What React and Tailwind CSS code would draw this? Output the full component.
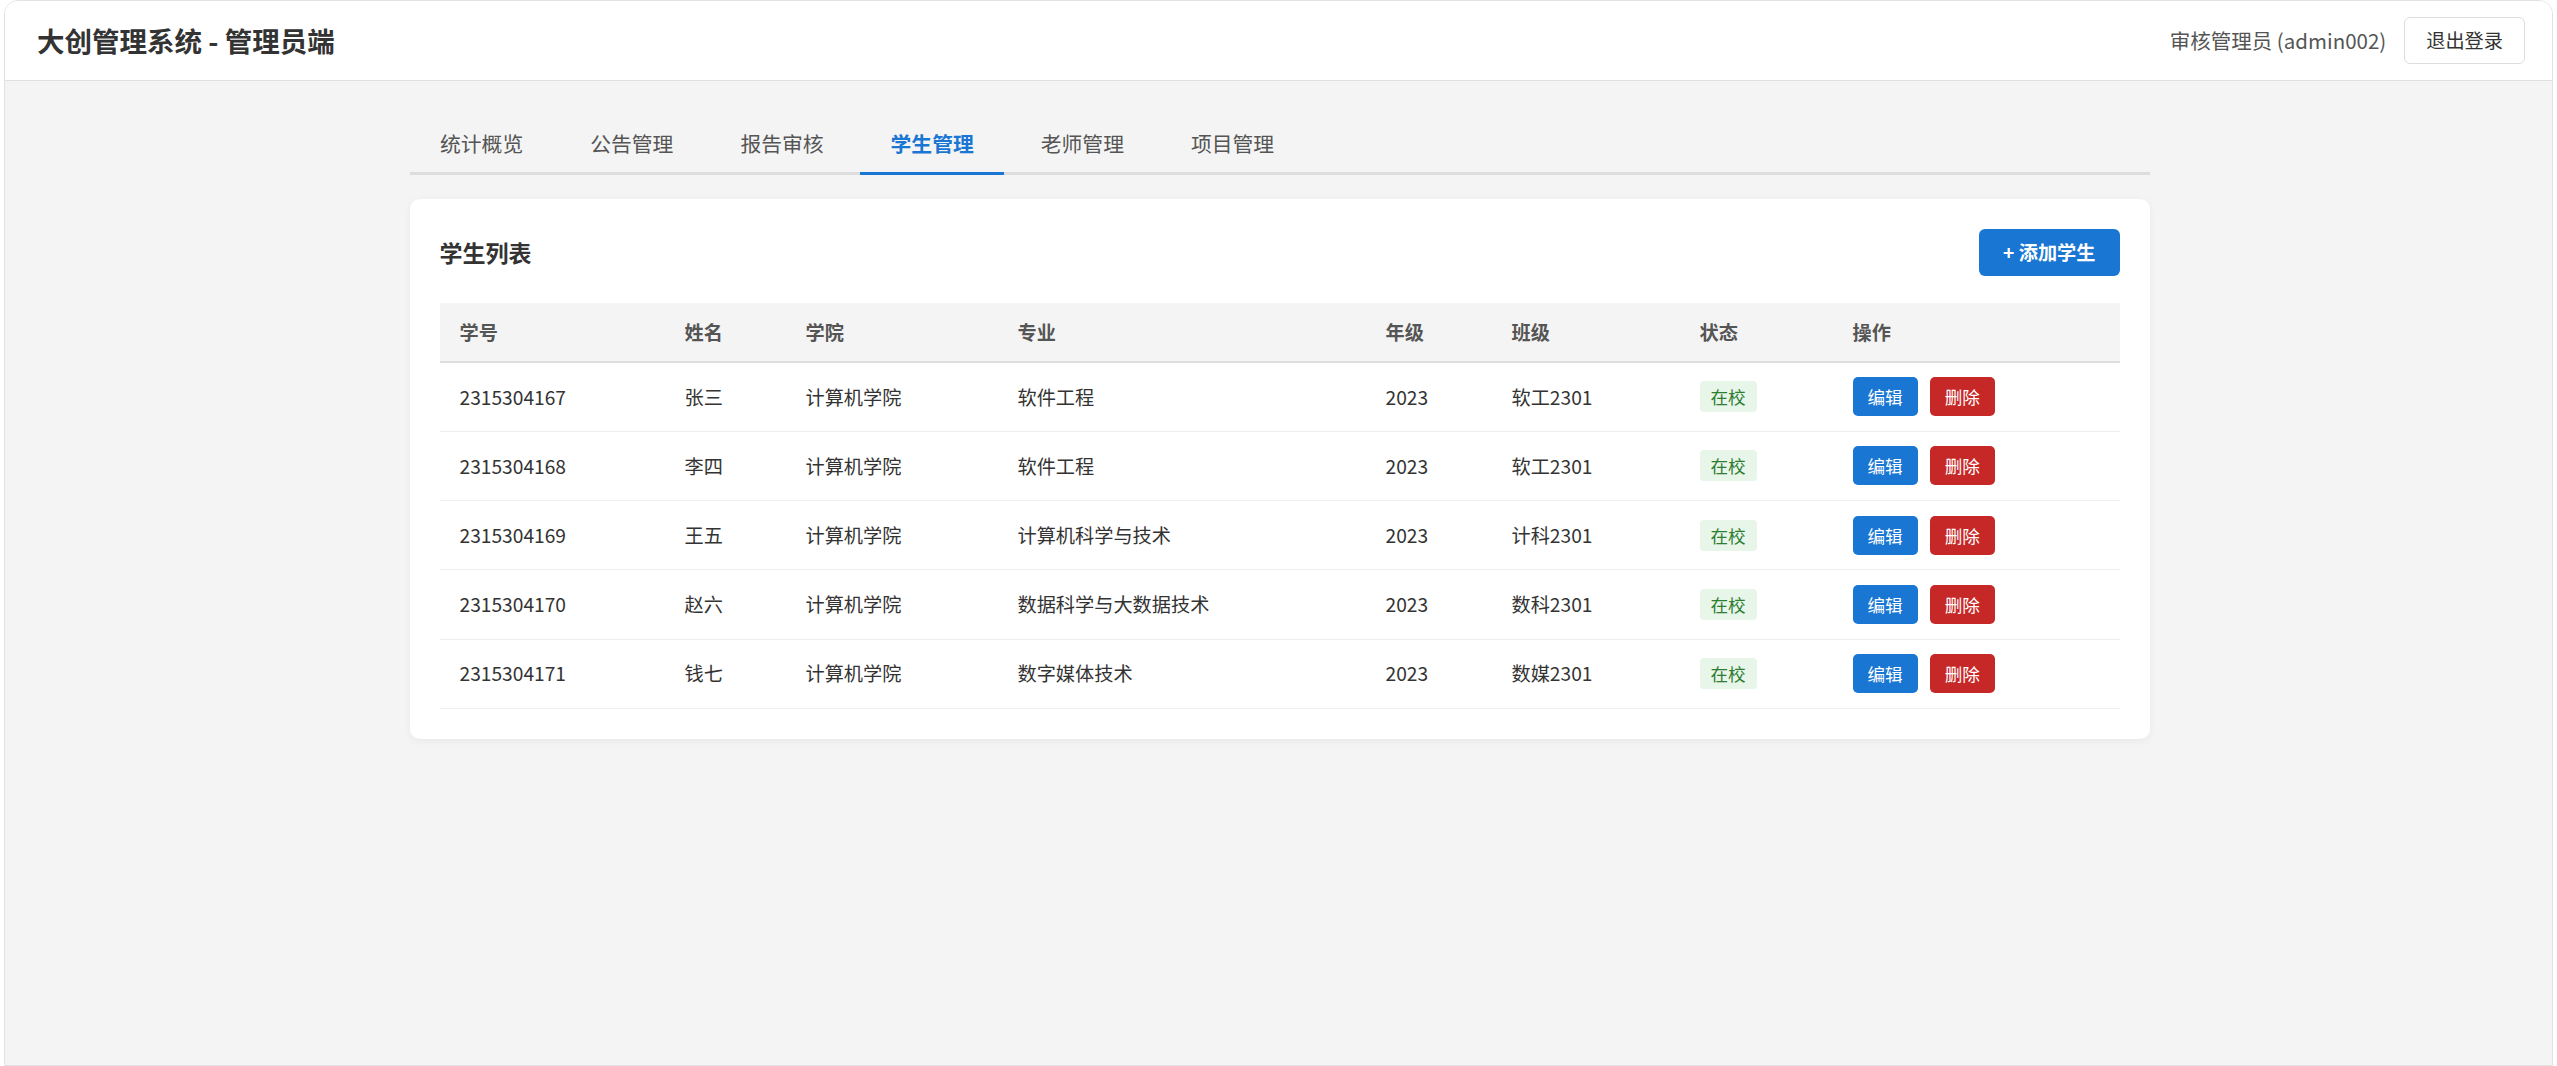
import React from "react";

const students = [
  { id: "2315304167", name: "张三", college: "计算机学院", major: "软件工程", grade: "2023", klass: "软工2301" },
  { id: "2315304168", name: "李四", college: "计算机学院", major: "软件工程", grade: "2023", klass: "软工2301" },
  { id: "2315304169", name: "王五", college: "计算机学院", major: "计算机科学与技术", grade: "2023", klass: "计科2301" },
  { id: "2315304170", name: "赵六", college: "计算机学院", major: "数据科学与大数据技术", grade: "2023", klass: "数科2301" },
  { id: "2315304171", name: "钱七", college: "计算机学院", major: "数字媒体技术", grade: "2023", klass: "数媒2301" },
];

const tabs = ["统计概览", "公告管理", "报告审核", "学生管理", "老师管理", "项目管理"];

// column widths measured off the reference table
const columns = [
  { label: "学号", w: "w-[225px]" },
  { label: "姓名", w: "w-[121px]" },
  { label: "学院", w: "w-[212px]" },
  { label: "专业", w: "w-[368px]" },
  { label: "年级", w: "w-[126px]" },
  { label: "班级", w: "w-[188px]" },
  { label: "状态", w: "w-[153px]" },
  { label: "操作", w: "" },
];

export default function App() {
  return (
    <div
      className="min-h-screen bg-white px-[4px]"
      style={{ fontFamily: '"Noto Sans CJK SC", "Noto Sans", sans-serif' }}
    >
      <div className="min-h-[1066px] flex flex-col border border-[#e2e2e2] rounded-t-[14px] overflow-hidden">
        {/* Top bar */}
        <header className="h-[80px] shrink-0 bg-white border-b border-[#e0e0e0] shadow-[0_1px_3px_rgba(0,0,0,0.04)] flex items-center justify-between pl-[32px] pr-[27px]">
          <h1 className="text-[27.5px] font-bold text-[#333]">大创管理系统 - 管理员端</h1>
          <div className="flex items-center gap-[18px]">
            <span className="text-[20.5px] text-[#555]">审核管理员 (admin002)</span>
            <button className="h-[47px] px-[21px] bg-white border border-[#ddd] rounded-[6px] text-[19.2px] text-[#333]">
              退出登录
            </button>
          </div>
        </header>

        {/* Main */}
        <main className="flex-1 bg-[#f4f4f4] pt-[33px]">
          <div className="w-[1740px] mx-auto translate-x-[1px]">
            <nav className="flex gap-[6px] border-b-[3px] border-[#dddddd]">
              {tabs.map((t) => {
                const active = t === "学生管理";
                return (
                  <div
                    key={t}
                    className={
                      active
                        ? "px-[30.5px] pt-[14px] pb-[14px] -mb-[3px] border-b-[3px] border-[#1976d2] text-[20.8px] leading-[30px] font-bold text-[#1976d2]"
                        : "px-[30.5px] pt-[14px] pb-[14px] -mb-[3px] border-b-[3px] border-transparent text-[20.8px] leading-[30px] text-[#555]"
                    }
                  >
                    {t}
                  </div>
                );
              })}
            </nav>

            <section className="mt-[24px] bg-white rounded-[10px] shadow-[0_2px_8px_rgba(0,0,0,0.05)] p-[30px]">
              <div className="flex items-center justify-between mb-[27px]">
                <h2 className="text-[23px] font-bold text-[#333]">学生列表</h2>
                <button className="h-[47px] px-[24px] bg-[#1976d2] text-white rounded-[6px] text-[19.2px] font-semibold">
                  + 添加学生
                </button>
              </div>

              <table className="w-full border-collapse text-left">
                <thead>
                  <tr className="bg-[#f4f4f4] border-b-2 border-[#dddddd]">
                    {columns.map((c) => (
                      <th key={c.label} className={`${c.w} h-[59px] px-[20px] text-[19.2px] font-bold text-[#555]`}>
                        {c.label}
                      </th>
                    ))}
                  </tr>
                </thead>
                <tbody>
                  {students.map((s) => (
                    <tr key={s.id} className="border-b border-[#eeeeee] text-[19.2px] text-[#333]">
                      <td className="h-[69.3px] px-[20px]">{s.id}</td>
                      <td className="px-[20px]">{s.name}</td>
                      <td className="px-[20px]">{s.college}</td>
                      <td className="px-[20px]">{s.major}</td>
                      <td className="px-[20px]">{s.grade}</td>
                      <td className="px-[20px]">{s.klass}</td>
                      <td className="px-[20px]">
                        <span className="inline-block px-[11px] py-[2px] leading-[27px] rounded-[4px] bg-[#e8f5e9] text-[#2e7d32] text-[17.6px]">
                          在校
                        </span>
                      </td>
                      <td className="px-[20px]">
                        <div className="flex gap-[12px]">
                          <button className="px-[15px] py-[6px] leading-[27px] rounded-[5px] bg-[#1976d2] text-white text-[17.6px]">
                            编辑
                          </button>
                          <button className="px-[15px] py-[6px] leading-[27px] rounded-[5px] bg-[#c62828] text-white text-[17.6px]">
                            删除
                          </button>
                        </div>
                      </td>
                    </tr>
                  ))}
                </tbody>
              </table>
            </section>
          </div>
        </main>
      </div>
    </div>
  );
}
